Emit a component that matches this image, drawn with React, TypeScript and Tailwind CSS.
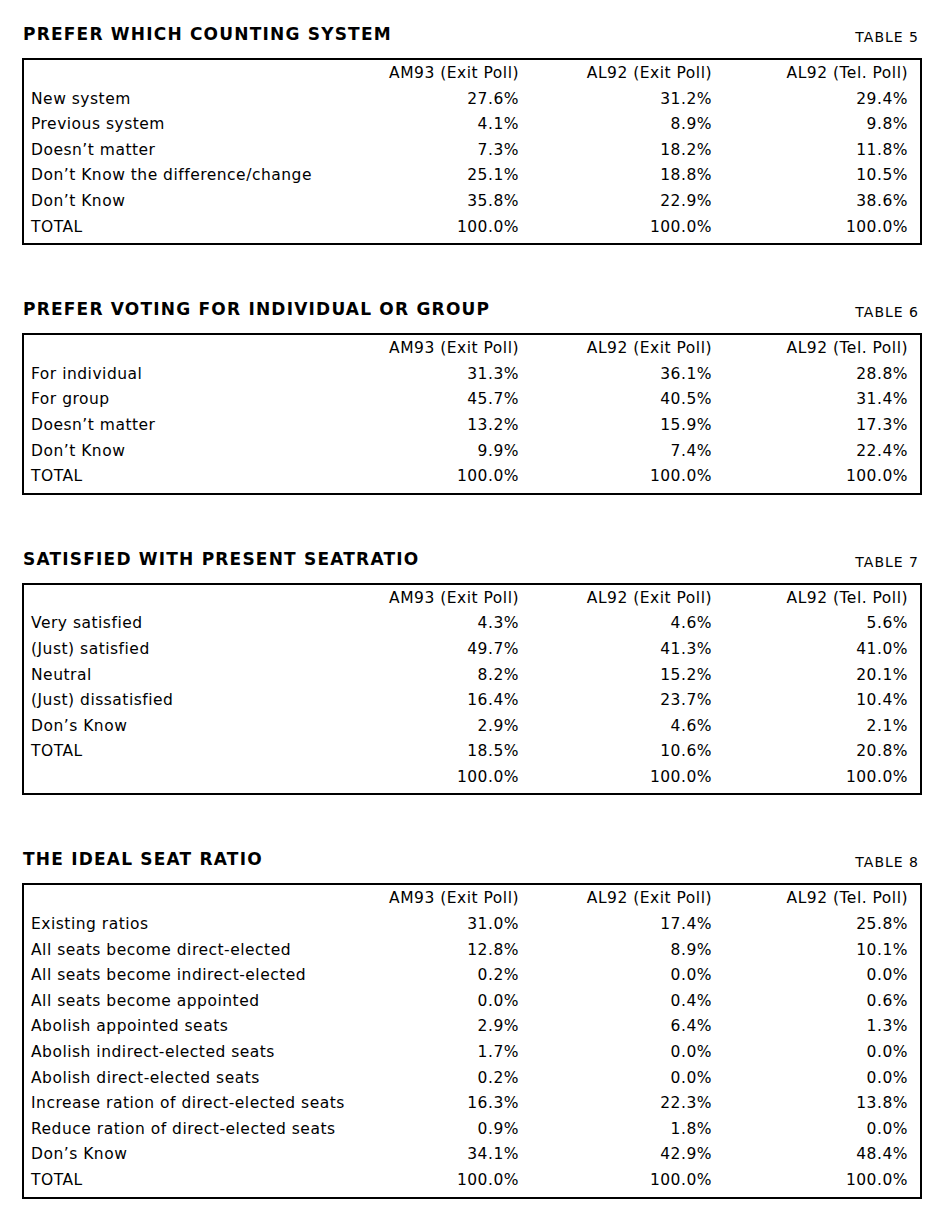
import React from "react";

type Row = { label: string; values: string[] };

type Table = {
  title: string;
  number: string;
  rows: Row[];
};

const columns = ["AM93 (Exit Poll)", "AL92 (Exit Poll)", "AL92 (Tel. Poll)"];

const tables: Table[] = [
  {
    title: "PREFER WHICH COUNTING SYSTEM",
    number: "TABLE 5",
    rows: [
      { label: "New system", values: ["27.6%", "31.2%", "29.4%"] },
      { label: "Previous system", values: ["4.1%", "8.9%", "9.8%"] },
      { label: "Doesn’t matter", values: ["7.3%", "18.2%", "11.8%"] },
      { label: "Don’t Know the difference/change", values: ["25.1%", "18.8%", "10.5%"] },
      { label: "Don’t Know", values: ["35.8%", "22.9%", "38.6%"] },
      { label: "TOTAL", values: ["100.0%", "100.0%", "100.0%"] },
    ],
  },
  {
    title: "PREFER VOTING FOR INDIVIDUAL OR GROUP",
    number: "TABLE 6",
    rows: [
      { label: "For individual", values: ["31.3%", "36.1%", "28.8%"] },
      { label: "For group", values: ["45.7%", "40.5%", "31.4%"] },
      { label: "Doesn’t matter", values: ["13.2%", "15.9%", "17.3%"] },
      { label: "Don’t Know", values: ["9.9%", "7.4%", "22.4%"] },
      { label: "TOTAL", values: ["100.0%", "100.0%", "100.0%"] },
    ],
  },
  {
    title: "SATISFIED WITH PRESENT SEATRATIO",
    number: "TABLE 7",
    rows: [
      { label: "Very satisfied", values: ["4.3%", "4.6%", "5.6%"] },
      { label: "(Just) satisfied", values: ["49.7%", "41.3%", "41.0%"] },
      { label: "Neutral", values: ["8.2%", "15.2%", "20.1%"] },
      { label: "(Just) dissatisfied", values: ["16.4%", "23.7%", "10.4%"] },
      { label: "Don’s Know", values: ["2.9%", "4.6%", "2.1%"] },
      { label: "TOTAL", values: ["18.5%", "10.6%", "20.8%"] },
      { label: "", values: ["100.0%", "100.0%", "100.0%"] },
    ],
  },
  {
    title: "THE IDEAL SEAT RATIO",
    number: "TABLE 8",
    rows: [
      { label: "Existing ratios", values: ["31.0%", "17.4%", "25.8%"] },
      { label: "All seats become direct-elected", values: ["12.8%", "8.9%", "10.1%"] },
      { label: "All seats become indirect-elected", values: ["0.2%", "0.0%", "0.0%"] },
      { label: "All seats become appointed", values: ["0.0%", "0.4%", "0.6%"] },
      { label: "Abolish appointed seats", values: ["2.9%", "6.4%", "1.3%"] },
      { label: "Abolish indirect-elected seats", values: ["1.7%", "0.0%", "0.0%"] },
      { label: "Abolish direct-elected seats", values: ["0.2%", "0.0%", "0.0%"] },
      { label: "Increase ration of direct-elected seats", values: ["16.3%", "22.3%", "13.8%"] },
      { label: "Reduce ration of direct-elected seats", values: ["0.9%", "1.8%", "0.0%"] },
      { label: "Don’s Know", values: ["34.1%", "42.9%", "48.4%"] },
      { label: "TOTAL", values: ["100.0%", "100.0%", "100.0%"] },
    ],
  },
];

const PollTable = ({ table }: { table: Table }) => {
  return (
    <section>
      {/* Heading */}
      <div className="flex justify-between items-start pl-px pr-[3px] mb-[13px]">
        <h2 className="text-[17px] leading-[20px] font-bold tracking-[1.2px]">{table.title}</h2>
        <span className="text-[14px] leading-[16px] tracking-[1px] mt-[5px]">{table.number}</span>
      </div>

      {/* Box */}
      <div className="border-2 border-black pt-px pb-[3px] pl-[7px] pr-[12px] text-[15.5px] leading-[25.6px] tracking-[0.5px]">
        <div className="grid grid-cols-[minmax(0,1fr)_193px_193px_196px]">
          <div />
          {columns.map((c) => (
            <div key={c} className="text-right whitespace-nowrap">
              {c}
            </div>
          ))}
          {table.rows.map((row, i) => (
            <React.Fragment key={i}>
              <div className="whitespace-nowrap">{row.label}</div>
              {row.values.map((v, j) => (
                <div key={j} className="text-right">
                  {v}
                </div>
              ))}
            </React.Fragment>
          ))}
        </div>
      </div>
    </section>
  );
};

const App = () => {
  return (
    <div
      className="min-h-screen bg-white text-black px-[22px] pt-[24px] pb-[18px] flex flex-col gap-[54px]"
      style={{ fontFamily: '"DejaVu Sans", Verdana, sans-serif' }}
    >
      {tables.map((t) => (
        <PollTable key={t.number} table={t} />
      ))}
    </div>
  );
};

export default App;
